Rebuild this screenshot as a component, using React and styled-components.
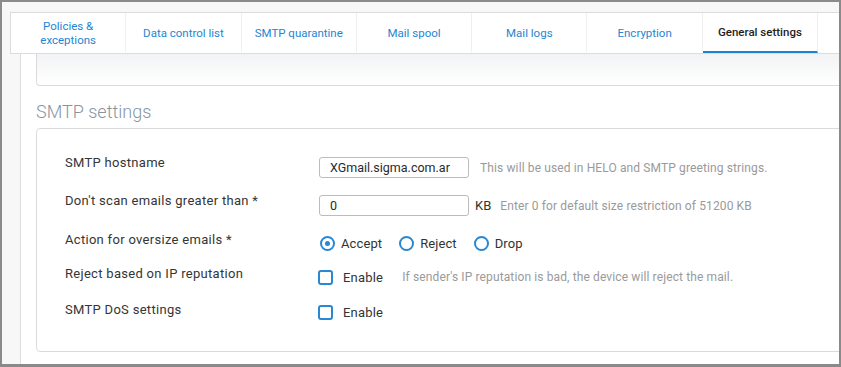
import React from "react";
import styled, { createGlobalStyle } from "styled-components";

const Global = createGlobalStyle`
  html, body { margin: 0; padding: 0; }
  body { font-family: Roboto, "Liberation Sans", Arial, sans-serif; background: #fff; }
  * { box-sizing: border-box; }
`;

const Frame = styled.div`
  width: 841px;
  height: 367px;
  border-style: solid;
  border-color: #8a8a8a;
  border-width: 2px 2px 3px 2px;
  background: #f7f7f7;
  padding: 10px 0 0 8px;
  display: flex;
  flex-direction: column;
  overflow: hidden;
`;

const TabBar = styled.div`
  display: flex;
  height: 42px;
  flex-shrink: 0;
  background: #fff;
  border: 1px solid #dcdcdc;
  border-right: none;
`;

const Tab = styled.div`
  width: 115.3px;
  flex-shrink: 0;
  display: flex;
  align-items: center;
  justify-content: center;
  text-align: center;
  font-size: 11.5px;
  line-height: 14px;
  color: ${(p) => (p.$active ? "#1e1e1e" : "#2486d2")};
  font-weight: ${(p) => (p.$active ? 500 : 400)};
  border-right: 1px solid #efefef;
  border-bottom: 2px solid ${(p) => (p.$active ? "#1b83cc" : "transparent")};
  padding-top: ${(p) => (p.$active ? "0" : "2px")};
`;

const Panel = styled.div`
  flex: 1;
  margin-left: 10px;
  border-left: 1px solid #dddddd;
  background: #fff;
  padding-left: 15px;
  overflow: hidden;
`;

const PrevBox = styled.div`
  height: 32px;
  margin-right: -20px;
  border: 1px solid #dadada;
  border-top: none;
  border-bottom-left-radius: 4px;
  background: linear-gradient(#f2f3f5, #ffffff);
`;

const Heading = styled.h2`
  margin: 14px 0 4px 0;
  font-size: 18px;
  line-height: 24px;
  font-weight: 300;
  color: #8795a3;
`;

const SettingsBox = styled.div`
  margin-right: -20px;
  border: 1px solid #dadada;
  border-radius: 4px;
  padding: 26px 0 0 28px;
  height: 224px;
`;

const Row = styled.div`
  display: flex;
  align-items: flex-start;
  height: ${(p) => p.$h}px;
`;

const Label = styled.div`
  width: 254px;
  flex-shrink: 0;
  font-size: 13px;
  line-height: 16px;
  letter-spacing: 0.3px;
  color: #353535;
`;

const Controls = styled.div`
  display: flex;
  align-items: center;
  margin-top: ${(p) => p.$mt || 0}px;
  height: ${(p) => p.$h || 21}px;
`;

const Input = styled.div`
  width: 150px;
  height: 21px;
  border: 1px solid #bcbcbc;
  border-radius: 3px;
  padding-left: 10px;
  display: flex;
  align-items: center;
  font-size: 12.5px;
  color: #2a2a2a;
`;

const Unit = styled.span`
  font-size: 13px;
  color: #333;
  margin-left: 6px;
`;

const Help = styled.span`
  font-size: 12px;
  letter-spacing: 0.12px;
  color: #9a9a9a;
  margin-left: ${(p) => p.$ml}px;
`;

const Option = styled.label`
  display: flex;
  align-items: center;
  font-size: 13px;
  letter-spacing: 0.1px;
  color: #333;
  margin-right: 16px;
  margin-left: 1px;
`;

const Radio = styled.span`
  width: 15px;
  height: 15px;
  border-radius: 50%;
  border: 2px solid #2a88d2;
  display: flex;
  align-items: center;
  justify-content: center;
  margin-right: 6px;
  &::after {
    content: "";
    width: 5px;
    height: 5px;
    border-radius: 50%;
    background: ${(p) => (p.$on ? "#2a88d2" : "transparent")};
  }
`;

const Check = styled.span`
  width: 15px;
  height: 15px;
  border-radius: 3px;
  border: 2px solid #2a88d2;
  margin-right: 10px;
`;

const CheckOpt = styled.label`
  display: flex;
  align-items: center;
  font-size: 13px;
  letter-spacing: 0.2px;
  color: #333;
  margin-left: -1px;
`;

const tabs = [
  "Policies &\nexceptions",
  "Data control list",
  "SMTP quarantine",
  "Mail spool",
  "Mail logs",
  "Encryption",
  "General settings",
];

export default function App() {
  return (
    <>
      <Global />
      <Frame>
        <TabBar>
          {tabs.map((t, i) => (
            <Tab key={t} $active={i === tabs.length - 1}>
              {t.split("\n").map((l, j) => (
                <React.Fragment key={j}>
                  {j > 0 && <br />}
                  {l}
                </React.Fragment>
              ))}
            </Tab>
          ))}
          <Tab />
        </TabBar>
        <Panel>
          <PrevBox />
          <Heading>SMTP settings</Heading>
          <SettingsBox>
            <Row $h={38}>
              <Label>SMTP hostname</Label>
              <Controls $mt={2}>
                <Input>XGmail.sigma.com.ar</Input>
                <Help $ml={11}>This will be used in HELO and SMTP greeting strings.</Help>
              </Controls>
            </Row>
            <Row $h={39}>
              <Label>Don't scan emails greater than *</Label>
              <Controls $mt={2}>
                <Input>0</Input>
                <Unit>KB</Unit>
                <Help $ml={9}>Enter 0 for default size restriction of 51200 KB</Help>
              </Controls>
            </Row>
            <Row $h={34}>
              <Label>Action for oversize emails *</Label>
              <Controls $mt={1} $h={20}>
                <Option><Radio $on />Accept</Option>
                <Option><Radio />Reject</Option>
                <Option><Radio />Drop</Option>
              </Controls>
            </Row>
            <Row $h={36}>
              <Label>Reject based on IP reputation</Label>
              <Controls $mt={1} $h={20}>
                <CheckOpt><Check />Enable</CheckOpt>
                <Help $ml={19}>If sender's IP reputation is bad, the device will reject the mail.</Help>
              </Controls>
            </Row>
            <Row $h={36}>
              <Label>SMTP DoS settings</Label>
              <Controls $mt={0} $h={20}>
                <CheckOpt><Check />Enable</CheckOpt>
              </Controls>
            </Row>
          </SettingsBox>
        </Panel>
      </Frame>
    </>
  );
}
